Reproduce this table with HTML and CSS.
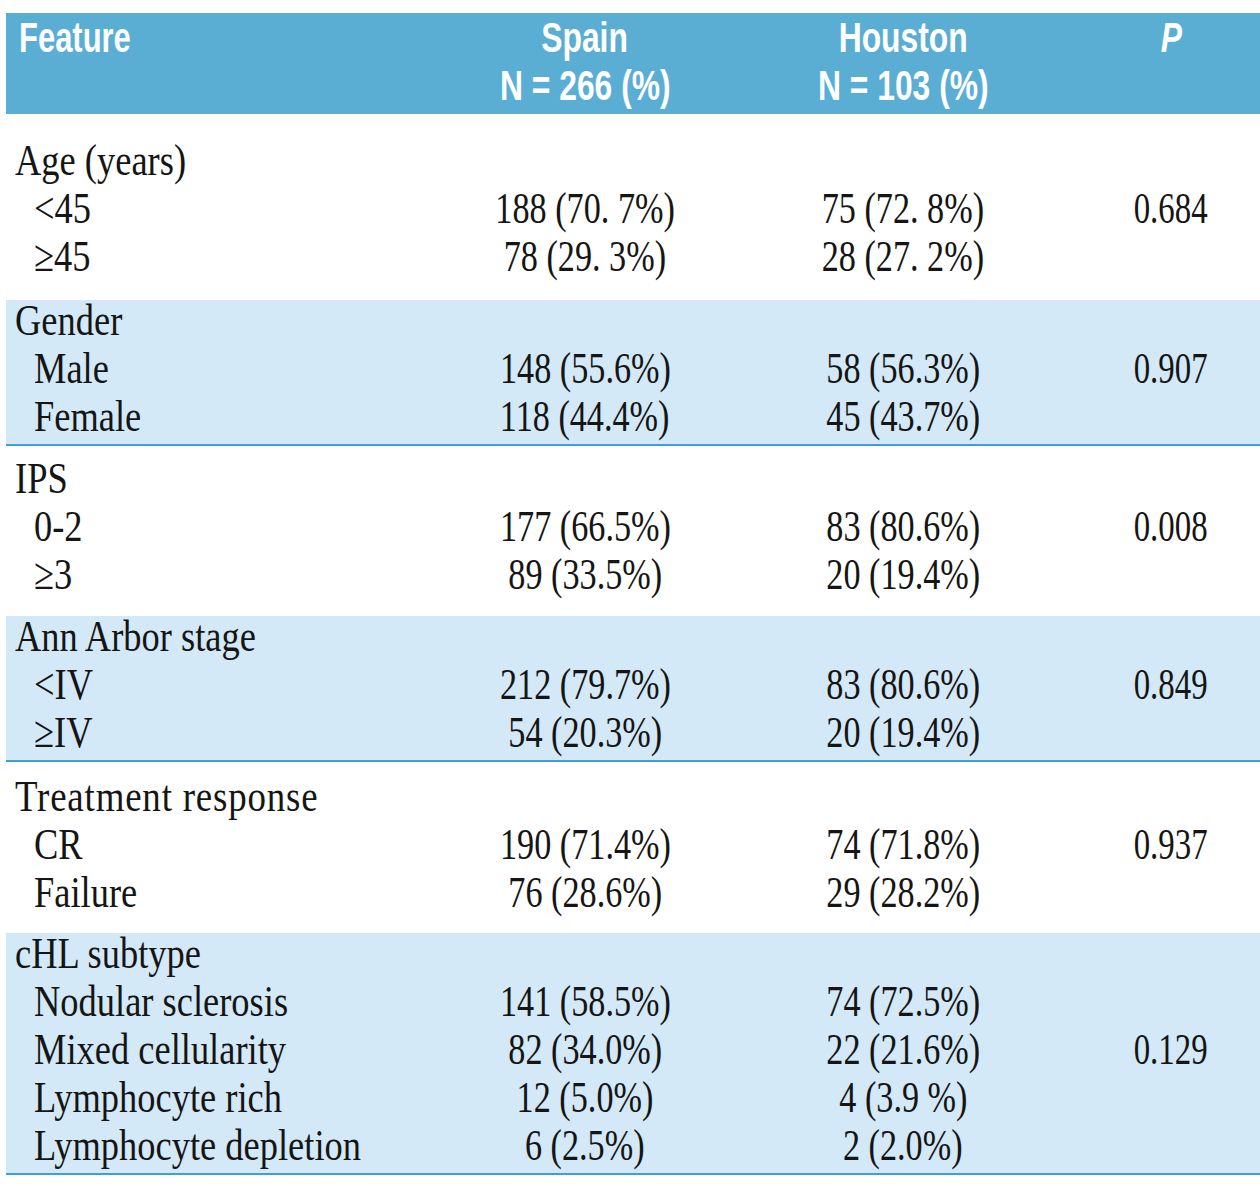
FILE: index.html
```html
<!DOCTYPE html>
<html lang="en">
<head>
<meta charset="utf-8">
<title>Feature comparison: Spain vs Houston</title>
<link rel="stylesheet" href="styles.css">
</head>
<body>
<div class="tbl">
  <div class="head">
    <div class="hrow">
      <div class="hc left"><span class="hs ol">Feature</span></div>
      <div class="hc"><span class="hs">Spain</span></div>
      <div class="hc"><span class="hs">Houston</span></div>
      <div class="hc"><span class="hs"><i>P</i></span></div>
    </div>
    <div class="hrow">
      <div class="hc left"></div>
      <div class="hc"><span class="hs">N = 266 (%)</span></div>
      <div class="hc"><span class="hs">N = 103 (%)</span></div>
      <div class="hc"></div>
    </div>
  </div>

  <div class="group first">
    <div class="row"><div class="lab"><span class="ls">Age (years)</span></div><div></div><div></div><div></div></div>
    <div class="row"><div class="lab sub"><span class="ls">&lt;45</span></div><div class="num"><span class="ns">188 (70. 7%)</span></div><div class="num"><span class="ns">75 (72. 8%)</span></div><div class="num"><span class="ps">0.684</span></div></div>
    <div class="row"><div class="lab sub"><span class="ls">≥45</span></div><div class="num"><span class="ns">78 (29. 3%)</span></div><div class="num"><span class="ns">28 (27. 2%)</span></div><div></div></div>
  </div>

  <div class="group shaded">
    <div class="row"><div class="lab"><span class="ls">Gender</span></div><div></div><div></div><div></div></div>
    <div class="row"><div class="lab sub"><span class="ls">Male</span></div><div class="num"><span class="ns">148 (55.6%)</span></div><div class="num"><span class="ns">58 (56.3%)</span></div><div class="num"><span class="ps">0.907</span></div></div>
    <div class="row"><div class="lab sub"><span class="ls">Female</span></div><div class="num"><span class="ns">118 (44.4%)</span></div><div class="num"><span class="ns">45 (43.7%)</span></div><div></div></div>
  </div>

  <div class="group plain ips">
    <div class="row"><div class="lab"><span class="ls">IPS</span></div><div></div><div></div><div></div></div>
    <div class="row"><div class="lab sub"><span class="ls">0-2</span></div><div class="num"><span class="ns">177 (66.5%)</span></div><div class="num"><span class="ns">83 (80.6%)</span></div><div class="num"><span class="ps">0.008</span></div></div>
    <div class="row"><div class="lab sub"><span class="ls">≥3</span></div><div class="num"><span class="ns">89 (33.5%)</span></div><div class="num"><span class="ns">20 (19.4%)</span></div><div></div></div>
  </div>

  <div class="group shaded">
    <div class="row"><div class="lab"><span class="ls">Ann Arbor stage</span></div><div></div><div></div><div></div></div>
    <div class="row"><div class="lab sub"><span class="ls">&lt;IV</span></div><div class="num"><span class="ns">212 (79.7%)</span></div><div class="num"><span class="ns">83 (80.6%)</span></div><div class="num"><span class="ps">0.849</span></div></div>
    <div class="row"><div class="lab sub"><span class="ls">≥IV</span></div><div class="num"><span class="ns">54 (20.3%)</span></div><div class="num"><span class="ns">20 (19.4%)</span></div><div></div></div>
  </div>

  <div class="group plain resp">
    <div class="row"><div class="lab"><span class="ls wide">Treatment response</span></div><div></div><div></div><div></div></div>
    <div class="row"><div class="lab sub"><span class="ls">CR</span></div><div class="num"><span class="ns">190 (71.4%)</span></div><div class="num"><span class="ns">74 (71.8%)</span></div><div class="num"><span class="ps">0.937</span></div></div>
    <div class="row"><div class="lab sub"><span class="ls">Failure</span></div><div class="num"><span class="ns">76 (28.6%)</span></div><div class="num"><span class="ns">29 (28.2%)</span></div><div></div></div>
  </div>

  <div class="group shaded">
    <div class="row"><div class="lab"><span class="ls">cHL subtype</span></div><div></div><div></div><div></div></div>
    <div class="row"><div class="lab sub"><span class="ls">Nodular sclerosis</span></div><div class="num"><span class="ns">141 (58.5%)</span></div><div class="num"><span class="ns">74 (72.5%)</span></div><div></div></div>
    <div class="row"><div class="lab sub"><span class="ls">Mixed cellularity</span></div><div class="num"><span class="ns">82 (34.0%)</span></div><div class="num"><span class="ns">22 (21.6%)</span></div><div class="num"><span class="ps">0.129</span></div></div>
    <div class="row"><div class="lab sub"><span class="ls">Lymphocyte rich</span></div><div class="num"><span class="ns">12 (5.0%)</span></div><div class="num"><span class="ns">4 (3.9 %)</span></div><div></div></div>
    <div class="row"><div class="lab sub"><span class="ls">Lymphocyte depletion</span></div><div class="num"><span class="ns">6 (2.5%)</span></div><div class="num"><span class="ns">2 (2.0%)</span></div><div></div></div>
  </div>
</div>
</body>
</html>
```

FILE: styles.css
```css
html, body {
  margin: 0;
  padding: 0;
  background: #ffffff;
}

body {
  font-family: "Liberation Serif", "Times New Roman", serif;
  color: #151515;
  overflow: hidden;
}

.tbl {
  margin: 13px 0 0 6px;
  width: 1254px;
}

.head {
  background: #5aaed3;
  padding-bottom: 5px;
  color: #ffffff;
  font-family: "Liberation Sans", Arial, sans-serif;
  font-weight: bold;
  font-size: 43px;
}

.hrow,
.row {
  display: grid;
  grid-template-columns: 440px 278px 358px 178px;
}

.hrow {
  height: 48px;
  line-height: 48px;
}

.hc {
  text-align: center;
  white-space: nowrap;
}

.hc.left {
  text-align: left;
  padding-left: 13px;
}

.hs {
  display: inline-block;
  transform: scaleX(0.74);
  transform-origin: center;
}

.hs.ol {
  transform-origin: left center;
  transform: scaleX(0.72);
}

.hs i {
  font-style: italic;
}

.group {
  font-size: 45px;
}

.group.first {
  padding: 26px 0 16px;
}

.group.ips {
  padding: 12px 0 14px;
}

.group.resp {
  padding: 14px 0 13px;
}

.group.shaded {
  background: #d3e9f8;
  border-bottom: 2px solid #3ba3d4;
  padding: 0;
}

.row {
  height: 40px;
  line-height: 40px;
  padding-bottom: 8px;
  white-space: nowrap;
}

.lab {
  padding-left: 9px;
}

.lab.sub {
  padding-left: 28px;
}

.ls {
  display: inline-block;
  transform: scaleX(0.81);
  transform-origin: left center;
}

.ls.wide {
  transform: scaleX(0.82);
  letter-spacing: 1px;
}

.num {
  text-align: center;
}

.ns {
  display: inline-block;
  transform: scaleX(0.76);
  transform-origin: center;
}

.ps {
  display: inline-block;
  transform: scaleX(0.73);
  transform-origin: center;
}
```
